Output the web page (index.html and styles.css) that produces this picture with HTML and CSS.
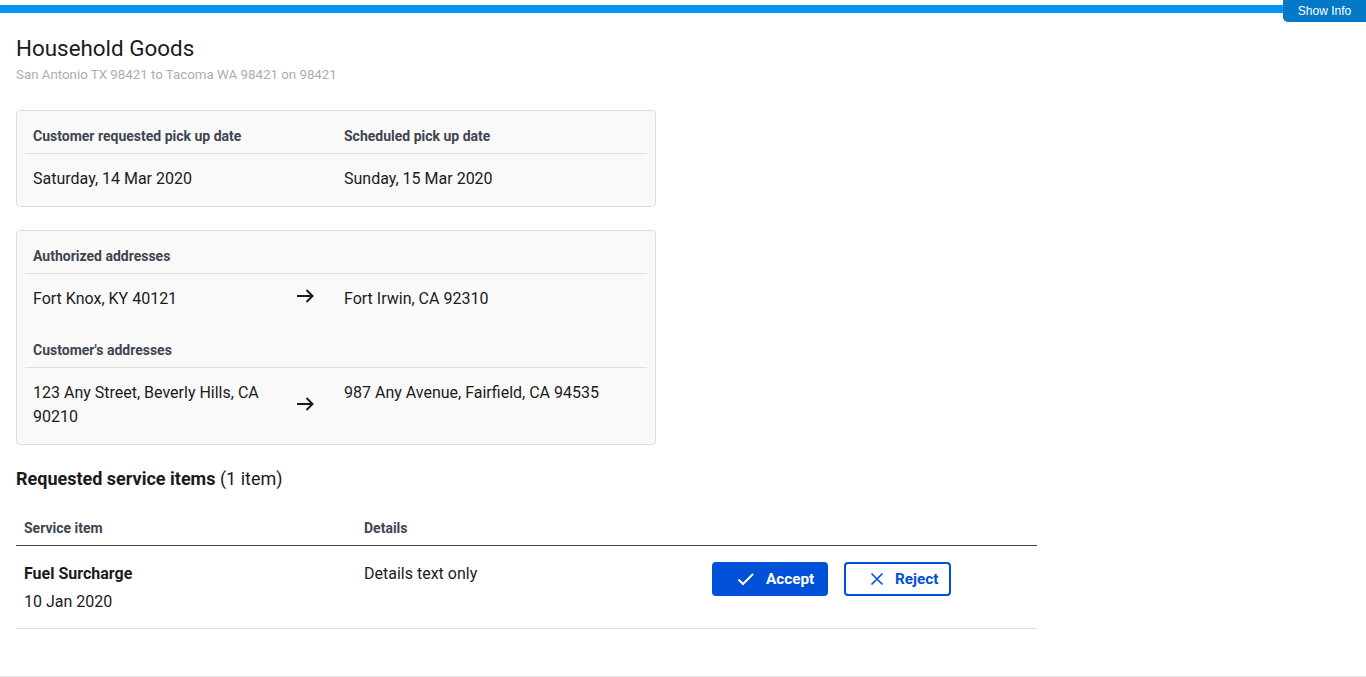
FILE: index.html
```html
<!DOCTYPE html>
<html lang="en">
<head>
<meta charset="utf-8">
<title>Household Goods</title>
<link rel="stylesheet" href="styles.css">
</head>
<body>
<div class="topbar"></div>
<button class="show-info" type="button">Show Info</button>
<main class="page">
  <header class="heading">
    <h1 class="title">Household Goods</h1>
    <p class="subtitle">San Antonio TX 98421 to Tacoma WA 98421 on 98421</p>
  </header>

  <section class="card">
    <div class="grid">
      <div class="th">Customer requested pick up date</div>
      <div class="th"></div>
      <div class="th">Scheduled pick up date</div>
      <div class="td">Saturday, 14 Mar 2020</div>
      <div class="td"></div>
      <div class="td">Sunday, 15 Mar 2020</div>
    </div>
  </section>

  <section class="card">
    <div class="grid">
      <div class="th span">Authorized addresses</div>
      <div class="td">Fort Knox, KY 40121</div>
      <div class="td arrow"><svg width="18" height="18" viewBox="0 0 18 18"><path d="M0 9h15.5M9.5 3L15.5 9l-6 6" fill="none" stroke="#1b1b1b" stroke-width="2"/></svg></div>
      <div class="td">Fort Irwin, CA 92310</div>
      <div class="th span gap">Customer's addresses</div>
      <div class="td">123 Any Street, Beverly Hills, CA 90210</div>
      <div class="td arrow low"><svg width="18" height="18" viewBox="0 0 18 18"><path d="M0 9h15.5M9.5 3L15.5 9l-6 6" fill="none" stroke="#1b1b1b" stroke-width="2"/></svg></div>
      <div class="td">987 Any Avenue, Fairfield, CA 94535</div>
    </div>
  </section>

  <h2 class="section-title"><strong>Requested service items</strong> (1 item)</h2>

  <div class="items">
    <div class="items-head">
      <div class="ith">Service item</div>
      <div class="ith">Details</div>
      <div class="ith"></div>
    </div>
    <div class="items-row">
      <div class="icell">
        <div class="item-name">Fuel Surcharge</div>
        <div class="item-date">10 Jan 2020</div>
      </div>
      <div class="icell">Details text only</div>
      <div class="icell actions">
        <button class="btn btn-accept" type="button">
          <svg width="18" height="18" viewBox="0 0 18 18"><path d="M1.5 9.5l4.5 4.5L16 4" fill="none" stroke="#fff" stroke-width="2"/></svg>
          <span>Accept</span>
        </button>
        <button class="btn btn-reject" type="button">
          <svg width="14" height="14" viewBox="0 0 14 14"><path d="M1.5 1.5l11 11M12.5 1.5l-11 11" fill="none" stroke="#0050d8" stroke-width="1.6"/></svg>
          <span>Reject</span>
        </button>
      </div>
    </div>
  </div>
  <div class="bottom-rule"></div>
</main>
</body>
</html>
```

FILE: styles.css
```css
* { box-sizing: border-box; }
html, body { margin: 0; padding: 0; background: #fff; }
body {
  font-family: Roboto, "Liberation Sans", sans-serif;
  color: #1b1b1b;
  overflow: hidden;
}
.topbar {
  margin-top: 5px;
  height: 8px;
  background: #0096f2;
}
.show-info {
  position: fixed;
  top: 0;
  right: 0;
  height: 22px;
  width: 83px;
  padding: 0;
  border: none;
  border-radius: 0 0 0 5px;
  background: #0279c7;
  color: #fff;
  font-family: "Liberation Sans", Arial, sans-serif;
  font-size: 12px;
}
.page {
  padding: 0 16px;
}
.heading {
  padding-top: 21px;
}
.title {
  margin: 0;
  font-size: 22.4px;
  font-weight: 400;
  line-height: 28px;
  color: #1b1b1b;
}
.subtitle {
  margin: 5px 0 0;
  font-size: 13.3px;
  line-height: 16px;
  color: #a9aeb1;
}
.card {
  width: 640px;
  padding: 8px;
  background: #f9f9f9;
  border: 1px solid #dcdee0;
  border-radius: 4px;
}
.heading + .card { margin-top: 27px; }
.card + .card { margin-top: 23px; }
.grid {
  display: grid;
  grid-template-columns: 264px 47px 311px;
}
.th {
  padding: 8px 8px;
  font-size: 14px;
  font-weight: 700;
  line-height: 18px;
  color: #3d4551;
  border-bottom: 1px solid #dcdee0;
}
.th.span { grid-column: 1 / -1; }
.th.gap { padding-top: 23px; }
.td {
  padding: 13px 8px 7px;
  font-size: 16px;
  line-height: 24px;
  color: #1b1b1b;
}
.td.arrow {
  display: flex;
  align-items: center;
  padding-top: 10px;
  padding-bottom: 10px;
}
.td.arrow.low {
  padding-top: 13px;
  padding-bottom: 9px;
}
.section-title {
  margin: 22px 0 0;
  font-size: 18px;
  line-height: 24px;
  font-weight: 400;
}
.section-title strong { font-weight: 700; }
.items {
  width: 1021px;
  margin-top: 20px;
}
.items-head, .items-row {
  display: grid;
  grid-template-columns: 340px 340px 341px;
}
.items-head {
  border-bottom: 1px solid #3d4551;
}
.ith {
  padding: 8px;
  font-size: 14px;
  font-weight: 700;
  line-height: 18px;
  color: #3d4551;
}
.items-row {
  border-bottom: 1px solid #dfe1e2;
}
.icell {
  padding: 16px 8px 14px;
  font-size: 16px;
  line-height: 24px;
}
.item-name { font-weight: 700; }
.item-date { margin-top: 4px; }
.actions {
  display: flex;
  align-items: flex-start;
  gap: 16px;
  padding-left: 16px;
}
.btn {
  display: inline-flex;
  align-items: center;
  justify-content: flex-start;
  height: 34px;
  border-radius: 4px;
  font-family: inherit;
  font-size: 15.3px;
  font-weight: 700;
  cursor: pointer;
}
.btn-accept {
  width: 116px;
  padding: 0 0 0 25px;
  gap: 11px;
  background: #0050d8;
  color: #fff;
  border: none;
}
.btn-reject {
  width: 107px;
  padding: 0 0 0 24px;
  gap: 11px;
  background: #fff;
  color: #0050d8;
  border: 2px solid #0050d8;
}
.bottom-rule {
  margin: 47px -16px 0;
  border-top: 1px solid #e6e6e6;
}
```
